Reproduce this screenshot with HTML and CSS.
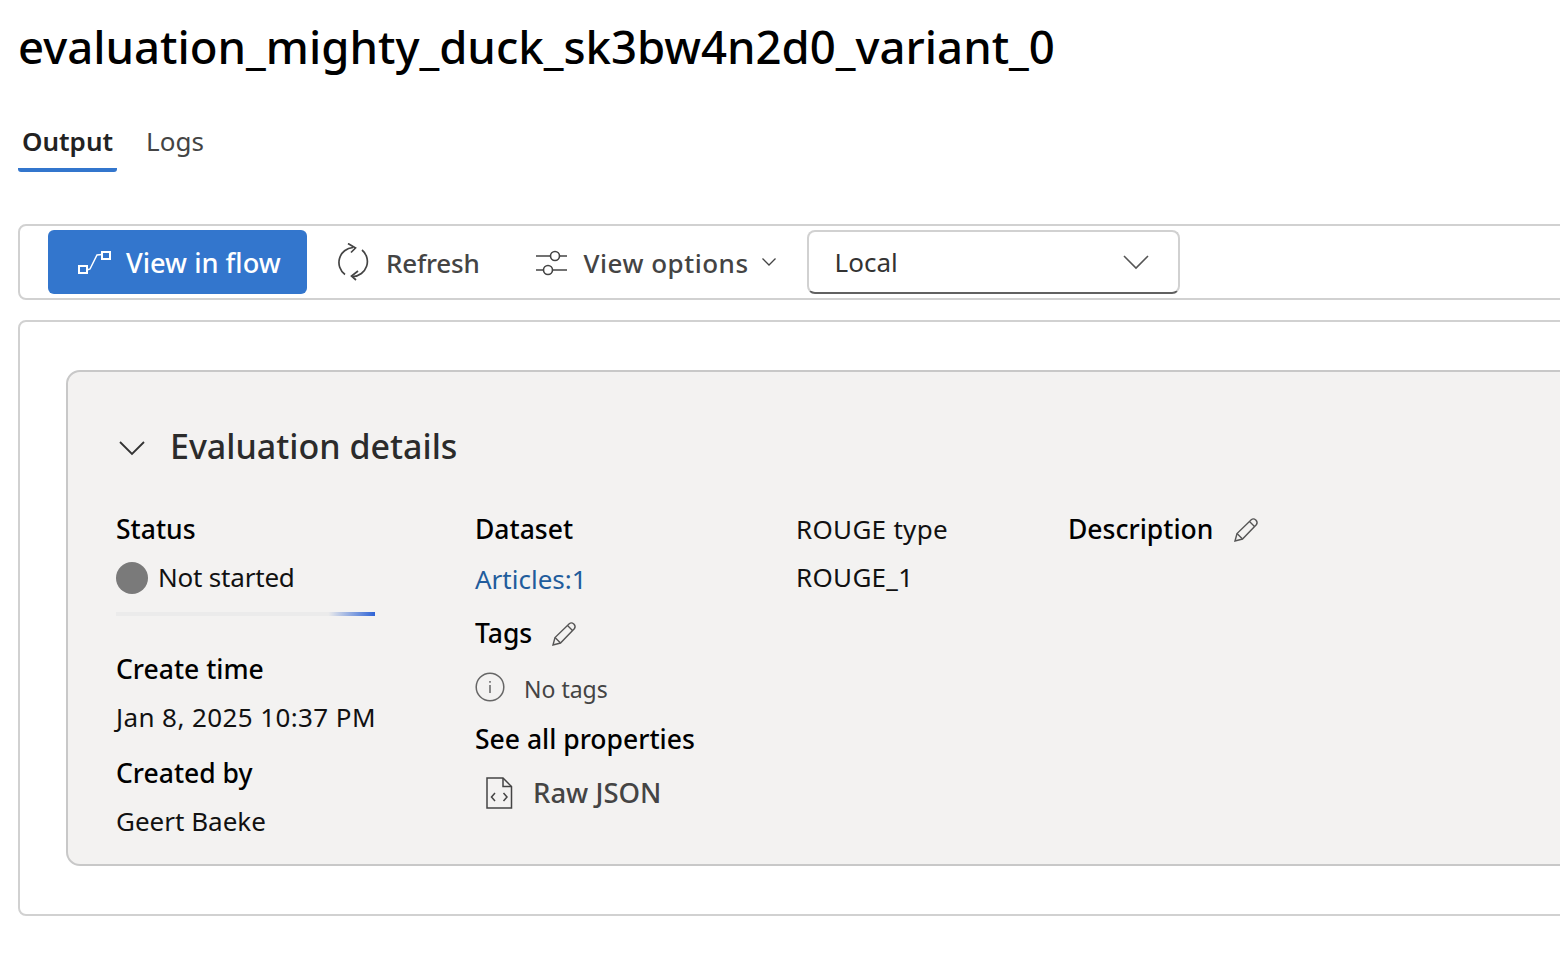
FILE: index.html
```html
<!DOCTYPE html>
<html>

<head>
    <title>Evaluation run</title>
    <link rel="stylesheet" href="styles.css">
</head>

<body>
    <h1 class="page-title">evaluation_mighty_duck_sk3bw4n2d0_variant_0</h1>

    <div class="tabs">
        <div class="tab tab-active">Output</div>
        <div class="tab">Logs</div>
    </div>

    <div class="toolbar">
        <button class="primary-btn">
            <svg class="flow-icon" width="34" height="26" viewBox="0 0 34 26" fill="none" stroke="#fff" stroke-width="2">
                <rect x="2" y="17" width="8" height="7" />
                <rect x="25" y="3" width="8" height="7" />
                <path d="M10 21 L13 20 L20 6 L25 5.500" stroke-width="1.500" />
            </svg>
            View in flow
        </button>
        <button class="tool-btn refresh-btn">
            <svg width="34" height="38" viewBox="0 0 34 38" fill="none" stroke="#444" stroke-width="1.700">
                <path d="M17 4.500 A15 15 0 0 0 9 31.500" />
                <path d="M17 33.500 A15 15 0 0 0 26 7" />
                <path d="M12 0.500 L19.500 5 L15 9.500" />
                <path d="M22 28 L15.500 33 L20 37" />
            </svg>
            <span class="tool-text">Refresh</span>
        </button>
        <button class="tool-btn options-btn">
            <svg width="34" height="28" viewBox="0 0 34 28" fill="none" stroke="#444" stroke-width="1.600">
                <path d="M1 8 H15 M25 8 H32" />
                <circle cx="20" cy="8" r="4.500" />
                <path d="M1 22 H8 M18 22 H32" />
                <circle cx="13" cy="22" r="4.500" />
            </svg>
            <span class="tool-text">View options</span>
            <svg class="small-chevron" width="16" height="10" viewBox="0 0 16 10" fill="none" stroke="#444" stroke-width="1.300">
                <path d="M1.500 1.500 L8 8 L14.500 1.500" />
            </svg>
        </button>
        <div class="dropdown">
            <span>Local</span>
            <svg width="28" height="16" viewBox="0 0 28 16" fill="none" stroke="#555" stroke-width="1.600">
                <path d="M2 2 L14 14 L26 2" />
            </svg>
        </div>
    </div>

    <div class="outer-panel">
        <div class="details-card">
            <div class="details-heading">
                <svg width="28" height="16" viewBox="0 0 28 16" fill="none" stroke="#333" stroke-width="1.800">
                    <path d="M2 2 L14 14 L26 2" />
                </svg>
                <h2>Evaluation details</h2>
            </div>

            <div class="details-grid">
                <div class="col">
                    <div class="row label">Status</div>
                    <div class="row status-row"><span class="status-dot"></span><span class="tight">Not started</span></div>
                    <div class="progress"></div>
                    <div class="row label">Create time</div>
                    <div class="row wide">Jan 8, 2025 10:37 PM</div>
                    <div class="row label created-by">Created by</div>
                    <div class="row">Geert Baeke</div>
                </div>

                <div class="col">
                    <div class="row label">Dataset</div>
                    <div class="row dataset-link">Articles:1</div>
                    <div class="row label tags-row">Tags
                        <svg class="pencil" width="26" height="26" viewBox="0 0 26 26" fill="none" stroke="#555" stroke-width="1.400">
                            <path d="M2 24 L4 16.500 L18.500 2.500 Q20.500 1 22.800 3 Q25 5.300 23.500 7.500 L9.500 22 Z" />
                            <path d="M4 16.500 L9.500 22 M16.500 4.500 L21.500 9.500" />
                        </svg>
                    </div>
                    <div class="row no-tags">
                        <svg width="30" height="30" viewBox="0 0 30 30" fill="none" stroke="#666" stroke-width="1.500">
                            <circle cx="15" cy="15" r="13.800" />
                            <path d="M15 13 V21 M15 9 V10.800" />
                        </svg>
                        No tags
                    </div>
                    <div class="row label see-all">See all properties</div>
                    <div class="row raw-json">
                        <svg width="28" height="32" viewBox="0 0 28 32" fill="none" stroke="#444" stroke-width="1.500">
                            <path d="M2 1 H18 L26.500 9.500 V31 H2 Z" />
                            <path d="M18 1 V9.500 H26.500" />
                            <path d="M10 16 L6.500 20 L10 24 M18.500 16 L22 20 L18.500 24" />
                        </svg>
                        Raw JSON
                    </div>
                </div>

                <div class="col rouge-col">
                    <div class="row">ROUGE type</div>
                    <div class="row">ROUGE_1</div>
                </div>

                <div class="col">
                    <div class="row label description-row">Description
                        <svg class="pencil" width="26" height="26" viewBox="0 0 26 26" fill="none" stroke="#555" stroke-width="1.400">
                            <path d="M2 24 L4 16.500 L18.500 2.500 Q20.500 1 22.800 3 Q25 5.300 23.500 7.500 L9.500 22 Z" />
                            <path d="M4 16.500 L9.500 22 M16.500 4.500 L21.500 9.500" />
                        </svg>
                    </div>
                </div>
            </div>
        </div>
    </div>
</body>

</html>
```

FILE: styles.css
```css
body {
    margin: 0;
    padding-left: 18px;
    font-family: "Noto Sans", "Open Sans", sans-serif;
    background-color: #fff;
    color: #111;
    overflow: hidden;
    height: 966px;
}

button {
    font-family: inherit;
    border: none;
    background: none;
    cursor: pointer;
}

.page-title {
    margin: 0;
    height: 96px;
    line-height: 92px;
    font-size: 45.500px;
    font-weight: 500;
    color: #000;
    white-space: nowrap;
}

.tabs {
    display: flex;
    height: 76px;
}

.tab {
    padding: 25px 3px 0 4px;
    margin-right: 25px;
    font-size: 26px;
    line-height: 40px;
    color: #444;
}

.tab-active {
    padding-right: 4px;
    font-weight: 600;
    color: #222;
    height: 76px;
    box-sizing: border-box;
    border-bottom: 4px solid #3376cd;
    border-radius: 0 0 3px 3px;
}

.toolbar {
    display: flex;
    align-items: center;
    box-sizing: border-box;
    width: 1600px;
    height: 76px;
    margin-top: 52px;
    padding-left: 28px;
    border: 2px solid #d1d1d1;
    border-radius: 8px;
}

.primary-btn {
    display: flex;
    align-items: center;
    gap: 15px;
    width: 259px;
    height: 64px;
    padding: 0 0 0 29px;
    background-color: #3376cd;
    color: #fff;
    font-size: 27.200px;
    font-weight: 500;
    border-radius: 6px;
}

.tool-btn {
    display: flex;
    align-items: center;
    gap: 16px;
    padding: 0;
    font-size: 26px;
    font-weight: 500;
    color: #444;
}

.tool-text {
    padding-top: 2px;
}

.refresh-btn {
    margin-left: 29px;
    letter-spacing: -0.200px;
}

.options-btn {
    gap: 15px;
    margin-left: 55px;
    letter-spacing: 0.500px;
}

.small-chevron {
    margin-left: -3px;
}

.dropdown {
    display: flex;
    align-items: center;
    justify-content: space-between;
    box-sizing: border-box;
    width: 373px;
    height: 64px;
    margin-left: 30px;
    padding: 0 28px 0 26px;
    border: 2px solid #d1d1d1;
    border-bottom-color: #616161;
    border-radius: 8px;
    font-size: 26px;
    color: #333;
}

.outer-panel {
    box-sizing: border-box;
    width: 1600px;
    height: 596px;
    margin-top: 20px;
    padding: 48px 0 0 46px;
    border: 2px solid #d1d1d1;
    border-radius: 8px;
}

.details-card {
    box-sizing: border-box;
    height: 496px;
    padding: 0 0 0 48px;
    background-color: #f3f2f1;
    border: 2px solid #c8c8c8;
    border-radius: 14px;
}

.details-heading {
    display: flex;
    align-items: center;
    gap: 24px;
    box-sizing: border-box;
    height: 134px;
    padding-top: 14px;
}

.details-heading svg {
    margin-left: 2px;
    margin-top: 4px;
}

.details-heading h2 {
    margin: 0;
    font-size: 34px;
    font-weight: 500;
    color: #2b2b2b;
}

.details-grid {
    display: grid;
    grid-template-columns: 359px 321px 272px auto;
}

.row {
    box-sizing: border-box;
    height: 48px;
    padding-bottom: 2px;
    line-height: 46px;
    font-size: 26px;
    white-space: nowrap;
}

.label {
    font-size: 26.500px;
    font-weight: 500;
    color: #000;
}

.status-row {
    display: flex;
    align-items: center;
    gap: 10px;
}

.status-dot {
    width: 32px;
    height: 32px;
    margin-top: 2px;
    border-radius: 50%;
    background-color: #7a7a7a;
}

.tight {
    letter-spacing: -0.200px;
}

.wide {
    letter-spacing: 0.400px;
}

.rouge-col .row {
    letter-spacing: 0.300px;
}

.progress {
    width: 259px;
    height: 4px;
    margin: 10px 0 30px;
    background: linear-gradient(90deg, #ebebeb 0, #ebebeb 82%, #2d63d6 100%);
}

.created-by {
    margin-top: 8px;
}

.dataset-link {
    margin-top: 2px;
    color: #215c9c;
}

.tags-row {
    display: flex;
    align-items: center;
    gap: 19px;
    margin-top: 6px;
}

.pencil {
    margin-top: 2px;
}

.no-tags {
    display: flex;
    align-items: center;
    gap: 19px;
    margin-top: 8px;
    font-size: 23px;
    color: #444;
}

.no-tags svg {
    flex-shrink: 0;
    margin-top: -4px;
}

.see-all {
    margin-top: 2px;
}

.raw-json {
    display: flex;
    align-items: center;
    gap: 20px;
    margin-top: 6px;
    padding-left: 10px;
    color: #444;
    font-size: 27.500px;
    font-weight: 500;
}

.description-row {
    display: flex;
    align-items: center;
    gap: 20px;
}
```
